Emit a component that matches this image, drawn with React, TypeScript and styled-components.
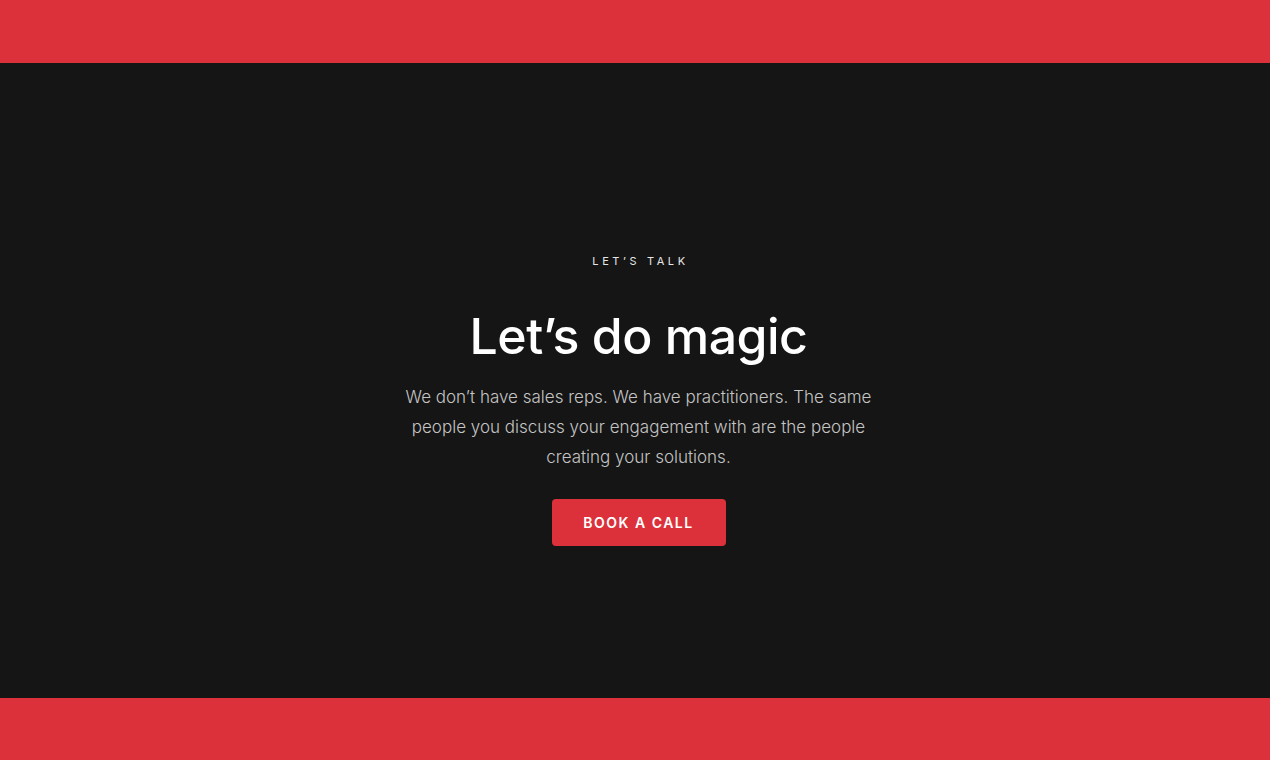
import React from "react";
import styled, { createGlobalStyle } from "styled-components";

const GlobalStyle = createGlobalStyle`
  html, body {
    margin: 0;
    padding: 0;
    background: #151515;
  }
  body {
    font-family: "Inter", "Noto Sans", sans-serif;
    -webkit-font-smoothing: antialiased;
  }
`;

const Page = styled.div`
  display: flex;
  flex-direction: column;
  height: 760px;
`;

const Band = styled.div<{ $height: number }>`
  height: ${(p) => p.$height}px;
  background: #dc313b;
  flex-shrink: 0;
`;

const Section = styled.section`
  flex: 1;
  background: #151515;
  display: flex;
  flex-direction: column;
  align-items: center;
  padding: 191px 0 0 7px;
  box-sizing: border-box;
`;

const Eyebrow = styled.div`
  font-size: 11px;
  line-height: 14px;
  letter-spacing: 3.6px;
  color: #e6e6e6;
  text-transform: uppercase;
  margin-right: -4px;
`;

const Title = styled.h1`
  margin: 36px 0 0;
  font-size: 50px;
  line-height: 64px;
  font-weight: 500;
  letter-spacing: -0.5px;
  color: #ffffff;
`;

const Lead = styled.p`
  margin: 14px 0 0;
  width: 470px;
  font-size: 17px;
  line-height: 30px;
  font-weight: 300;
  color: #c4c4c4;
  text-align: center;
`;

const Button = styled.button`
  margin-top: 27px;
  width: 174px;
  height: 47px;
  border: none;
  border-radius: 4px;
  background: #dc313b;
  color: #ffffff;
  font-family: "Inter", sans-serif;
  font-size: 14px;
  font-weight: 600;
  letter-spacing: 1.5px;
  cursor: pointer;
`;

export default function App() {
  return (
    <>
      <GlobalStyle />
      <Page>
        <Band $height={63} />
        <Section>
          <Eyebrow>Let’s talk</Eyebrow>
          <Title>Let’s do magic</Title>
          <Lead>
            We don’t have sales reps. We have practitioners. The same people you
            discuss your engagement with are the people creating your solutions.
          </Lead>
          <Button>BOOK A CALL</Button>
        </Section>
        <Band $height={62} />
      </Page>
    </>
  );
}
